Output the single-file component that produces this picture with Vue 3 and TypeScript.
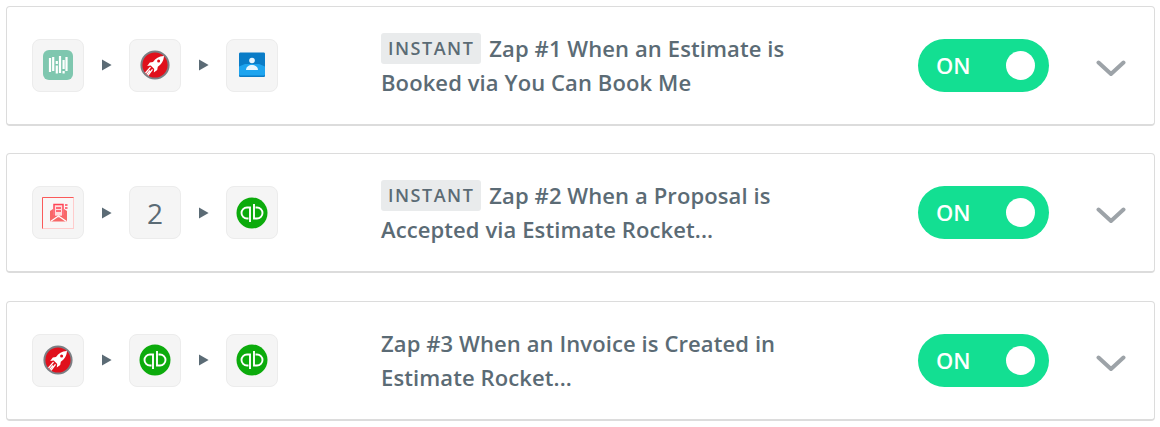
<script setup lang="ts">
type Step = 'meter' | 'rocket' | 'ycbm' | 'proposal' | 'qb' | 'count'

interface Zap {
  steps: Step[]
  instant: boolean
  title: string
}

const zaps: Zap[] = [
  { steps: ['meter', 'rocket', 'ycbm'], instant: true, title: 'Zap #1 When an Estimate is Booked via You Can Book Me' },
  { steps: ['proposal', 'count', 'qb'], instant: true, title: 'Zap #2 When a Proposal is Accepted via Estimate Rocket...' },
  { steps: ['rocket', 'qb', 'qb'], instant: false, title: 'Zap #3 When an Invoice is Created in Estimate Rocket...' }
]
</script>

<template>
  <div class="zap-list">
    <div v-for="zap in zaps" :key="zap.title" class="zap-card">
      <div class="steps">
        <template v-for="(step, i) in zap.steps" :key="i">
          <svg v-if="i > 0" class="step-arrow" width="10" height="12" viewBox="0 0 10 12">
            <path d="M0 .5 9.6 6 0 11.500z" fill="#5b6b75" />
          </svg>
          <div class="step-box">
            <span v-if="step === 'count'" class="step-count">2</span>

            <svg v-else-if="step === 'meter'" width="30" height="30" viewBox="0 0 30 30">
              <rect width="30" height="30" rx="6" fill="#7fc7af" />
              <path
                d="M7 8v14M10.200 7v14M13.800 11v3M13.800 15.500v8M17 6v17M20.600 10v9M20.600 21v2.500M23.500 7v14"
                stroke="#fff"
                stroke-width="2.200"
                fill="none"
              />
            </svg>

            <svg v-else-if="step === 'rocket'" width="30" height="30" viewBox="0 0 30 30">
              <circle cx="15" cy="15" r="13.600" fill="#e0101c" stroke="#7b7f84" stroke-width="2" />
              <path d="M23.500 6c-4.500 0-8 2.400-10.500 6l-3.200.6L7.200 16l3.500-.4 3.500 3.500-.4 3.500 3.400-2.600.6-3.200c3.600-2.500 6-6 6.200-11.300z" fill="#fff" />
              <circle cx="18.600" cy="11" r="1.500" fill="#e0101c" />
              <path d="M10.500 17.200 5.500 23M12.500 19.300 8 25.300M10 20.500 6.800 24.300" stroke="#fff" stroke-width="1.300" />
            </svg>

            <svg v-else-if="step === 'ycbm'" width="26" height="26" viewBox="0 0 26 26">
              <path d="M0 2c0-1 .5-1.500 1.500-1.500h23c1 0 1.500.5 1.500 1.500v21.500c0 1-.5 1.500-1.500 1.500h-23C.5 25 0 24.500 0 23.500z" fill="#0a7cc7" />
              <path d="M0 14.500 6 12h14l6 2.500V22c0 1-.5 1.500-1.500 1.500h-23C.5 23.500 0 23 0 22z" fill="#1ea4ef" />
              <circle cx="13" cy="8.500" r="2.800" fill="#e9f6fe" />
              <path d="M7 18c0-3 2.700-5 6-5s6 2 6 5z" fill="#e9f6fe" />
            </svg>

            <svg v-else-if="step === 'proposal'" width="32" height="32" viewBox="0 0 32 32">
              <rect x=".5" y=".5" width="31" height="31" fill="#f9f6f6" stroke="#fcc" />
              <path d="M.5 31.500V.5h31" fill="none" stroke="#fa5a5a" />
              <path d="M12 7.500h9v12h-9z" fill="#fdd" stroke="#f45" stroke-width="1.500" />
              <path d="M14 11h5M14 14h5" stroke="#f45" stroke-width="1.300" />
              <path d="M8 14v10.500h17V14l-3-2v6l-5.500 2.500L11 18v-6z" fill="#f76868" />
              <path d="M8.500 24.500 16.500 19l8 5.500" fill="none" stroke="#fff" stroke-width="1.200" />
              <path d="M23 8h2.500M23 11h2.500" stroke="#f45" stroke-width="1.500" />
            </svg>

            <svg v-else width="32" height="32" viewBox="0 0 32 32">
              <circle cx="16" cy="16" r="15.500" fill="#0cab0c" />
              <path
                d="M14 25V10.500h-3a5.500 5.500 0 0 0 0 11h1.500M18 7v14.500h3a5.500 5.500 0 0 0 0-11h-1.500"
                fill="none"
                stroke="#fff"
                stroke-width="1.900"
              />
            </svg>
          </div>
        </template>
      </div>

      <div class="zap-title">
        <span v-if="zap.instant" class="badge">INSTANT</span>{{ zap.title }}
      </div>

      <div class="toggle">
        <span class="toggle-label">ON</span>
        <span class="toggle-knob" />
      </div>

      <svg class="chevron" width="30" height="17" viewBox="0 0 30 17">
        <path d="M2.500 2.500 15 14 27.500 2.500" fill="none" stroke="#9da3a8" stroke-width="4" stroke-linecap="round" stroke-linejoin="round" />
      </svg>
    </div>
  </div>
</template>

<style>
body {
  background: #fff;
}
</style>

<style scoped>
.zap-list {
  display: flex;
  flex-direction: column;
  gap: 27.500px;
  padding: 5.500px 5px 0 6px;
  font-family: "Open Sans", "Liberation Sans", sans-serif;
}

.zap-card {
  box-sizing: border-box;
  height: 120px;
  display: flex;
  align-items: center;
  padding: 0 27px 0 25px;
  background: #fff;
  border: 1px solid #dcdcdc;
  border-bottom-width: 2px;
  border-radius: 4px;
}

.steps {
  display: flex;
  align-items: center;
  width: 349px;
  flex: none;
}

.step-box {
  box-sizing: border-box;
  width: 52px;
  height: 53px;
  flex: none;
  display: flex;
  align-items: center;
  justify-content: center;
  background: #f5f5f5;
  border: 1px solid #ececec;
  border-radius: 8px;
}

.step-arrow {
  margin: 0 17px 0 18px;
  flex: none;
}

.step-count {
  font-size: 28px;
  color: #5b6b75;
}

.zap-title {
  width: 420px;
  flex: none;
  padding-bottom: 1px;
  font-size: 22px;
  font-weight: 600;
  line-height: 34px;
  letter-spacing: .1px;
  color: #5b6b75;
}

.badge {
  display: inline-block;
  height: 31px;
  padding: 0 7px;
  margin-right: 8px;
  background: #e9ebec;
  border-radius: 3px;
  font-size: 18px;
  line-height: 31px;
  letter-spacing: 1.500px;
  vertical-align: 2px;
}

.toggle {
  box-sizing: border-box;
  width: 131px;
  height: 53px;
  margin-left: 117px;
  flex: none;
  display: flex;
  align-items: center;
  justify-content: space-between;
  padding: 0 14px 0 18px;
  background: #13df92;
  border-radius: 27px;
}

.toggle-label {
  margin-bottom: 1px;
  font-size: 22px;
  font-weight: 600;
  color: #fff;
}

.toggle-knob {
  width: 29px;
  height: 29px;
  background: #fff;
  border-radius: 50%;
}

.chevron {
  margin-top: 6px;
  margin-left: 47px;
  flex: none;
}
</style>
